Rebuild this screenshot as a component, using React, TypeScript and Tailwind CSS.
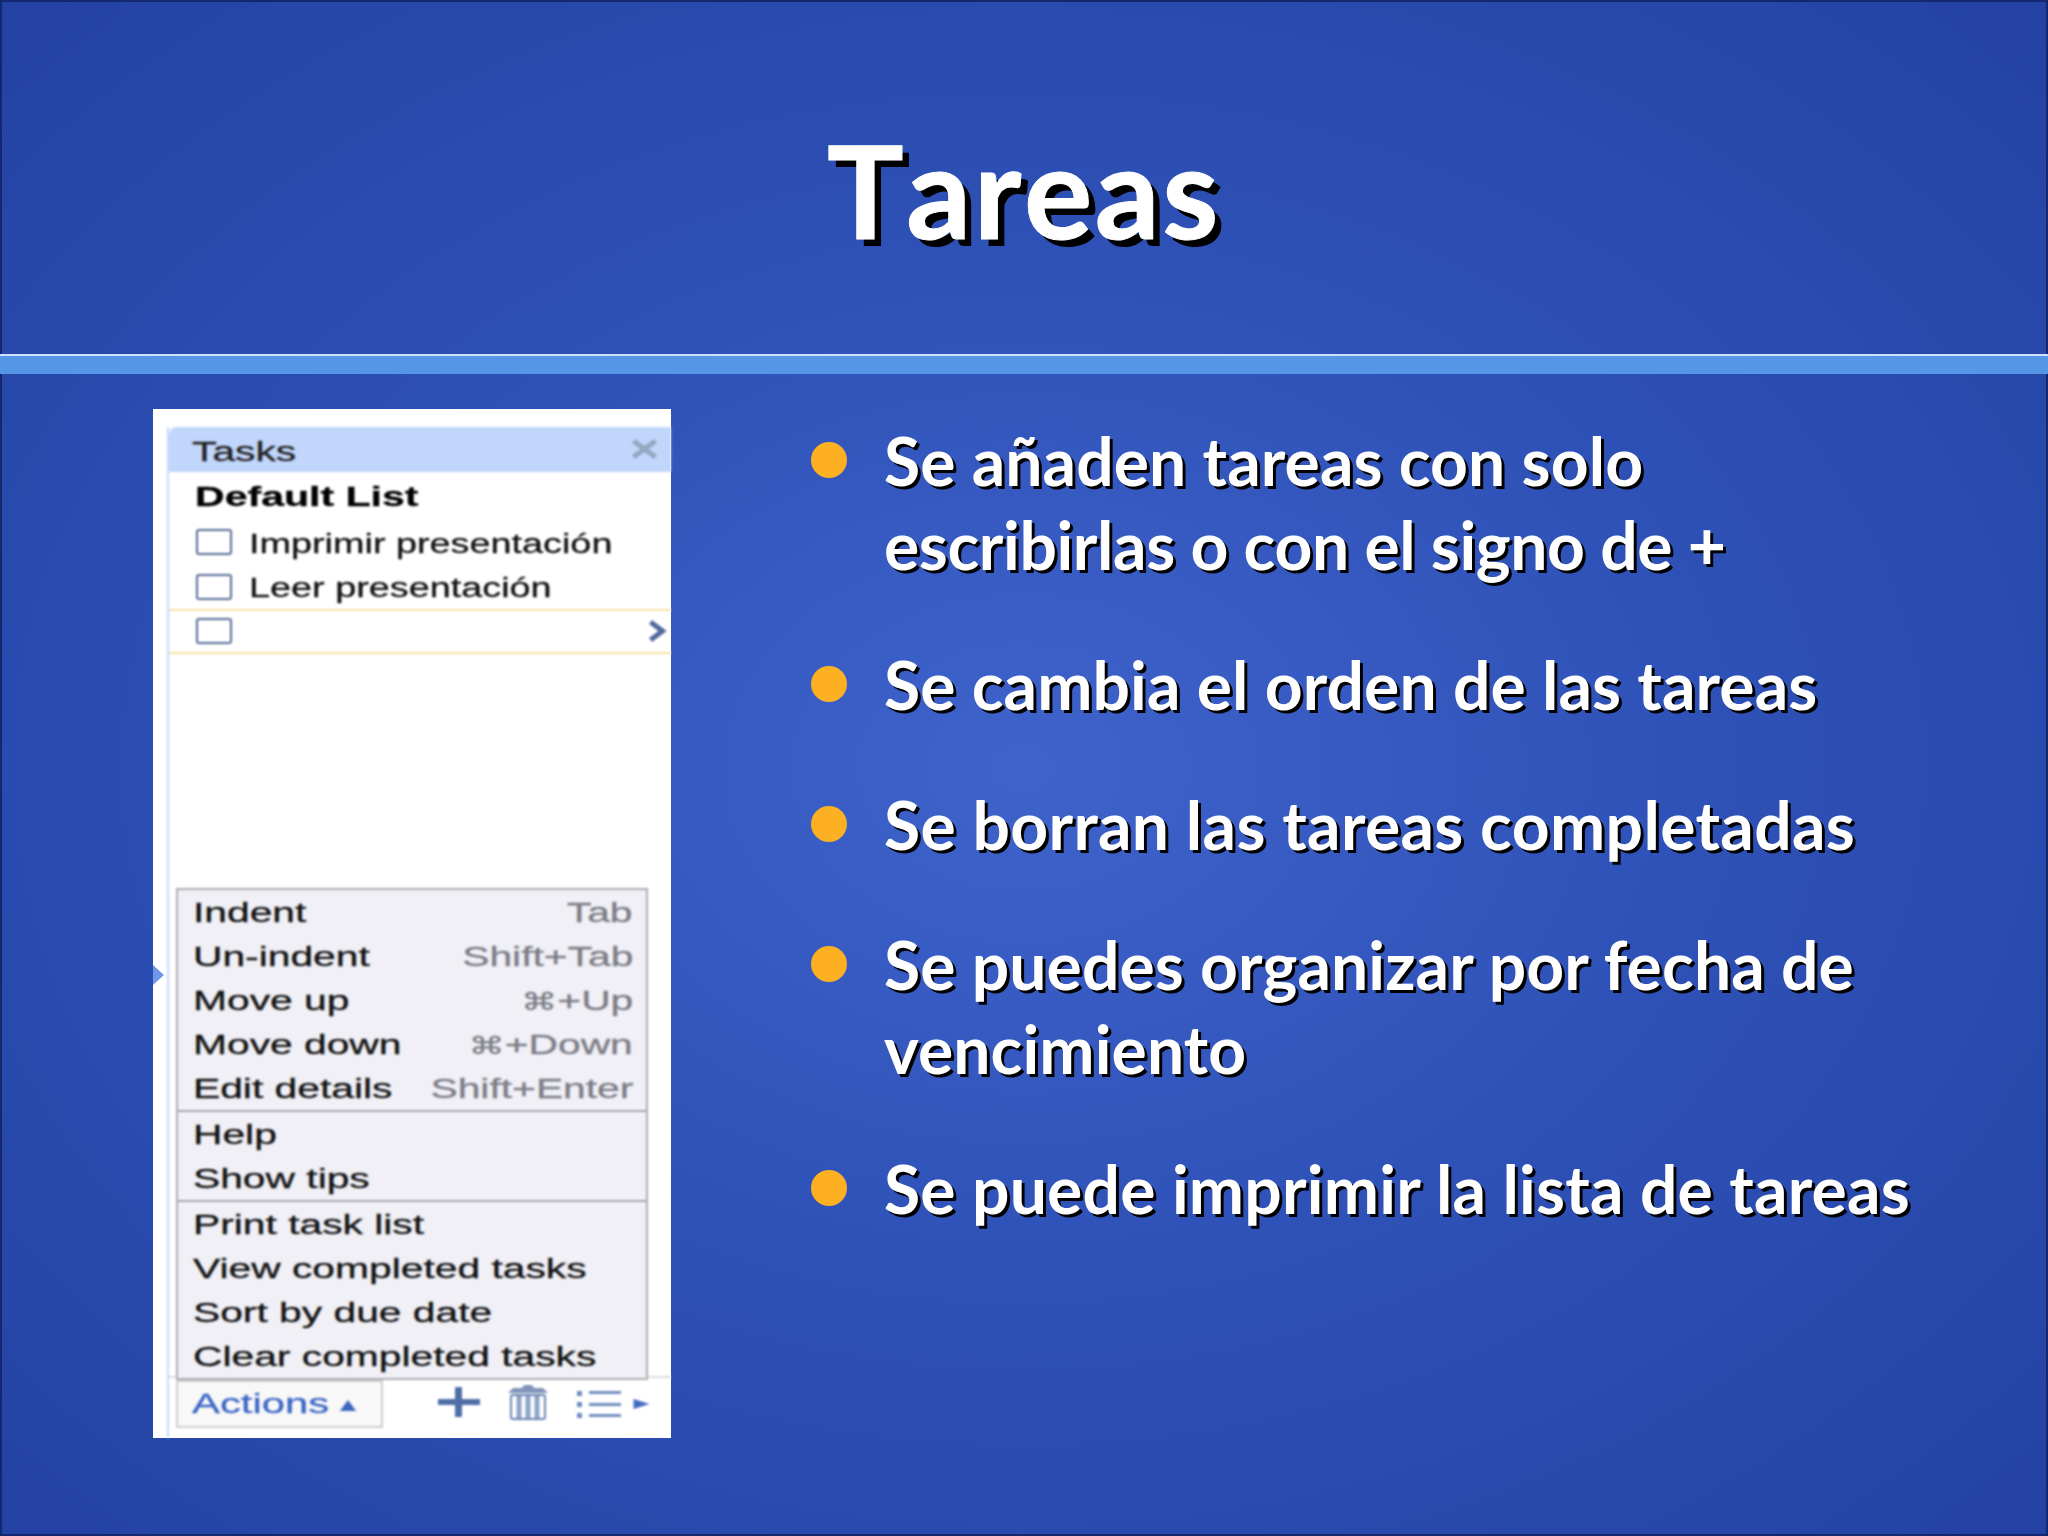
function Stretch({ children, scale = 'scale-x-[1.51]' }: { children: React.ReactNode; scale?: string }) {
  return <span className={`inline-block origin-left whitespace-nowrap ${scale}`}>{children}</span>
}

function StretchRight({ children }: { children: React.ReactNode }) {
  return <span className="-mr-[3px] inline-block origin-right whitespace-nowrap scale-x-[1.51] text-[#7c7c86]">{children}</span>
}

function Cmd() {
  return <span className="text-[24px]">⌘</span>
}

function Checkbox() {
  return <div className="h-[26px] w-[36px] rounded-[3px] border-2 border-[#566b95] bg-white" />
}

function MenuRow({ label, keys }: { label: string; keys?: React.ReactNode }) {
  return (
    <div className="flex h-[44px] items-center justify-between pl-[15px] pr-[16px] pt-[2px] text-[27px] leading-none text-[#111]">
      <Stretch>{label}</Stretch>
      {keys && <StretchRight>{keys}</StretchRight>}
    </div>
  )
}

function TaskPanel() {
  return (
    <div className="relative flex h-[1029px] w-[518px] flex-col bg-white pl-[14px] pt-[18px] font-['Liberation_Sans','DejaVu_Sans',sans-serif] [-webkit-text-stroke:0.3px]">
      {/* Small marker on the left edge */}
      <svg viewBox="0 0 11 20" className="absolute left-0 top-[556px] h-[20px] w-[11px]" fill="#6f96e8">
        <path d="M0 0 L11 10 L0 20 Z" />
      </svg>

      <div className="flex flex-1 flex-col border-l-2 border-[#c3d9ff] blur-[0.8px]">
        {/* Header */}
        <div className="flex h-[45px] items-center justify-between rounded-tl-lg bg-[#c1d6fb] pl-[23px] pr-[13px] pt-[5px] text-[27px] leading-none text-[#222]">
          <Stretch>Tasks</Stretch>
          <svg viewBox="0 0 26 20" className="-mt-[6px] h-[20px] w-[27px]" fill="none" stroke="#93a7c2" strokeWidth="5">
            <path d="M2 2 L24 18 M24 2 L2 18" />
          </svg>
        </div>

        {/* List */}
        <div className="flex h-[47px] items-center pl-[26px] pt-[4px] text-[27px] font-bold leading-none text-black">
          <Stretch scale="scale-x-[1.52]">Default List</Stretch>
        </div>
        <div className="flex h-[44px] items-center gap-[17px] pl-[27px] pt-[1px] text-[27px] leading-none text-[#111]">
          <Checkbox />
          <span className="pt-[5px]">
            <Stretch scale="scale-x-[1.4]">Imprimir presentación</Stretch>
          </span>
        </div>
        <div className="flex h-[46px] items-center gap-[17px] pl-[27px] pt-[1px] text-[27px] leading-none text-[#111]">
          <Checkbox />
          <span className="pt-[4px]">
            <Stretch scale="scale-x-[1.4]">Leer presentación</Stretch>
          </span>
        </div>
        <div className="flex h-[45px] items-center justify-between border-y-2 border-[#f5e3a3] pb-[2px] pl-[27px] pr-[4px]">
          <Checkbox />
          <svg viewBox="0 0 18 22" className="h-[22px] w-[19px]" fill="none" stroke="#4f6a9c" strokeWidth="5">
            <path d="M2 2 L14 11 L2 20" />
          </svg>
        </div>

        <div className="flex-1" />

        {/* Actions menu */}
        <div className="relative z-10 -mb-[4px] ml-[7px] w-[472px] border-2 border-[#adadb3] bg-[#f0f0f6]">
          <div className="border-b-2 border-[#a8a8ae]">
            <MenuRow label="Indent" keys="Tab" />
            <MenuRow label="Un-indent" keys="Shift+Tab" />
            <MenuRow label="Move up" keys={<><Cmd />+Up</>} />
            <MenuRow label="Move down" keys={<><Cmd />+Down</>} />
            <MenuRow label="Edit details" keys="Shift+Enter" />
          </div>
          <div className="border-b-2 border-[#a8a8ae]">
            <MenuRow label="Help" />
            <MenuRow label="Show tips" />
          </div>
          <MenuRow label="Print task list" />
          <MenuRow label="View completed tasks" />
          <MenuRow label="Sort by due date" />
          <MenuRow label="Clear completed tasks" />
        </div>

        {/* Footer */}
        <div className="flex h-[62px] items-start border-t-2 border-[#dcdcdc] pl-[7px] pt-[2px]">
          <div className="flex h-[48px] w-[207px] items-center gap-[58px] border-2 border-[#cfcfcf] bg-[#f8f8f8] pl-[14px] text-[27px] leading-none text-[#3a66c4]">
            <Stretch scale="scale-x-[1.55]">Actions</Stretch>
            <svg viewBox="0 0 18 12" className="mt-[3px] h-[11px] w-[18px]" fill="#3f69c0">
              <path d="M9 0 L18 12 L0 12 Z" />
            </svg>
          </div>
          <svg viewBox="0 0 42 30" className="ml-[54px] mt-[7px] h-[30px] w-[44px]" fill="#4f6ea6">
            <path d="M17 0 H24 V12 H42 V18 H24 V30 H17 V18 H0 V12 H17 Z" />
          </svg>
          <svg viewBox="0 0 40 36" className="ml-[26px] mt-[4px] h-[36px] w-[42px]" fill="none">
            <path d="M0 9 L5 4 H14 L16 1 H24 L26 4 H35 L40 9 Z" fill="#7f95bb" />
            <rect x="3" y="11" width="34" height="24" rx="2" stroke="#6c86b3" strokeWidth="2" fill="#fff" />
            <path d="M11 12 V34 M20 12 V34 M29 12 V34" stroke="#8ea3c9" strokeWidth="5" />
          </svg>
          <svg viewBox="0 0 44 28" className="ml-[27px] mt-[10px] h-[28px] w-[46px]" fill="#6f8cbc">
            <rect x="0" y="1" width="5" height="5" />
            <rect x="0" y="12" width="5" height="5" />
            <rect x="0" y="23" width="5" height="5" />
            <rect x="12" y="1" width="32" height="3" />
            <rect x="12" y="13" width="32" height="3" />
            <rect x="12" y="24" width="32" height="3" />
          </svg>
          <svg viewBox="0 0 16 10" className="ml-[11px] mt-[19px] h-[10px] w-[17px]" fill="#3f69c0">
            <path d="M0 0 L16 5 L0 10 Z" />
          </svg>
        </div>
      </div>
    </div>
  )
}

const BULLETS = [
  [
    { text: 'Se añaden tareas con solo', track: 'tracking-[0.1px]' },
    { text: 'escribirlas o con el signo de +', track: 'tracking-[-0.4px]' },
  ],
  [{ text: 'Se cambia el orden de las tareas', track: 'tracking-[0.1px]' }],
  [{ text: 'Se borran las tareas completadas', track: 'tracking-[0.35px]' }],
  [
    { text: 'Se puedes organizar por fecha de', track: 'tracking-[0.1px]' },
    { text: 'vencimiento', track: 'tracking-[0.1px]' },
  ],
  [{ text: 'Se puede imprimir la lista de tareas', track: 'tracking-[0.2px]' }],
]

export default function App() {
  return (
    <div className="flex h-[1536px] w-[2048px] flex-col border-2 border-[#14286e] bg-[radial-gradient(ellipse_at_50%_50%,#3e63cb_0%,#2f52b8_45%,#2342a3_100%)] font-['Lato',sans-serif] text-white">
      <header className="flex h-[352px] items-center justify-center pt-[24px]">
        <h1 className="text-[128px] font-bold leading-none tracking-[2.5px] [font-kerning:none] [-webkit-text-stroke:1px_white] [text-shadow:7px_7px_0_#000]">
          Tareas
        </h1>
      </header>
      <div className="-mx-[2px] h-[20px] border-t-2 border-[#cfe0fa] bg-[#5596e6]" />
      <main className="flex pl-[151px] pt-[35px]">
        <TaskPanel />
        <ul className="ml-[140px] flex flex-col gap-[60px] pt-[14px] text-[66px] font-bold leading-[84px] [text-shadow:3px_3px_0_#000]">
          {BULLETS.map((lines) => (
            <li key={lines[0].text} className="flex items-start">
              <span className="mt-[19px] h-[36px] w-[36px] shrink-0 rounded-full bg-[#fdb021]" />
              <div className="-mt-[4px] ml-[37px] whitespace-nowrap">
                {lines.map((line) => (
                  <div key={line.text} className={line.track}>
                    {line.text}
                  </div>
                ))}
              </div>
            </li>
          ))}
        </ul>
      </main>
    </div>
  )
}
